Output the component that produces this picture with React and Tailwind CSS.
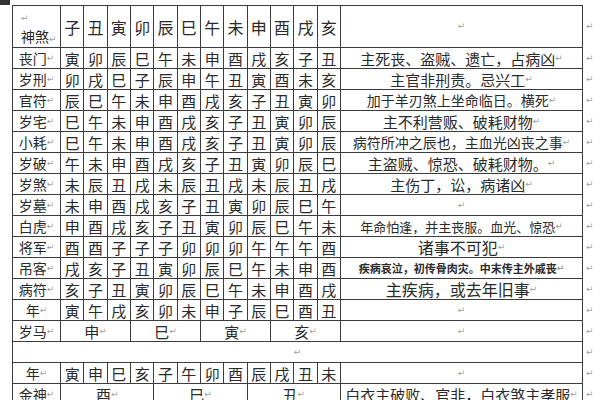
const branches = ["子", "丑", "寅", "卯", "辰", "巳", "午", "未", "申", "酉", "戌", "亥"];

// each row: name, 12 branch cells, note text and its font size class
const rows = [
  { name: "丧门", cells: "寅卯辰巳午未申酉戌亥子丑", note: "主死丧、盗贼、遗亡，占病凶", size: "text-[15px]" },
  { name: "岁刑", cells: "卯戌巳子辰申午丑寅酉未亥", note: "主官非刑责。忌兴工", size: "text-[15px]" },
  { name: "官符", cells: "辰巳午未申酉戌亥子丑寅卯", note: "加于羊刃煞上坐命临日。横死", size: "text-[14px]" },
  { name: "岁宅", cells: "巳午未申酉戌亥子丑寅卯辰", note: "主不利营贩、破耗财物", size: "text-[15px]" },
  { name: "小耗", cells: "巳午未申酉戌亥子丑寅卯辰", note: "病符所冲之辰也，主血光凶丧之事", size: "text-[14px]" },
  { name: "岁破", cells: "午未申酉戌亥子丑寅卯辰巳", note: "主盗贼、惊恐、破耗财物。", size: "text-[15px]" },
  { name: "岁煞", cells: "未辰丑戌未辰丑戌未辰丑戌", note: "主伤丁，讼，病诸凶", size: "text-[15px]" },
  { name: "岁墓", cells: "未申酉戌亥子丑寅卯辰巳午", note: "", size: "text-[15px]" },
  { name: "白虎", cells: "申酉戌亥子丑寅卯辰巳午未", note: "年命怕逢，并主丧服。血光、惊恐", size: "text-[13px]" },
  { name: "将军", cells: "酉酉子子子卯卯卯午午午酉", note: "诸事不可犯", size: "text-[16px]" },
  { name: "吊客", cells: "戌亥子丑寅卯辰巳午未申酉", note: "疾病哀泣，初传骨肉灾。中末传主外戚丧", size: "text-[11px] font-bold" },
  { name: "病符", cells: "亥子丑寅卯辰巳午未申酉戌", note: "主疾病，或去年旧事", size: "text-[16px]" },
  { name: "年", cells: "寅午戌亥卯未申子辰巳酉丑", note: "", size: "text-[15px]" },
];

const Mark = () => (
  <span className="text-[9px] leading-none text-[#a0a0a0] font-['DejaVu_Sans',sans-serif]">↵</span>
);

const cell = "border border-[#3c3c3c] p-0";

// fixed-height cell body so rows stay 21px
function Box({ children, className = "" }) {
  return (
    <div className={"h-[20px] flex items-center justify-center leading-none whitespace-nowrap overflow-hidden " + className}>
      {children}
    </div>
  );
}

export default function App() {
  return (
    <div className="w-[600px] h-[400px] overflow-hidden bg-white relative font-['Noto_Sans_CJK_SC',sans-serif] text-[#2a2a2a]">
      {/* word table handle */}
      <div className="absolute left-0 top-0 w-[10px] h-[5px] bg-[#333]"></div>
      <div className="pl-[12px] pt-[5px]">
        <table className="table-fixed border-collapse w-[584px]">
          <colgroup>
            <col className="w-[48px]" />
            {branches.map((b) => (
              <col key={b} className="w-[23.33px]" />
            ))}
            <col className="w-[242px]" />
            <col className="w-[14px]" />
          </colgroup>
          <tbody>
            <tr>
              <td className={cell}>
                <div className="h-[41px] flex flex-col justify-between pt-[8px] pb-[3px] pl-[8px] leading-none">
                  <Mark />
                  <span className="text-[14px] whitespace-nowrap">神煞<Mark /></span>
                </div>
              </td>
              {branches.map((b) => (
                <td key={b} className={cell}>
                  <div className="h-[41px] flex items-center justify-center text-[16px] leading-none">{b}</div>
                </td>
              ))}
              <td className={cell}>
                <div className="h-[41px] flex items-center justify-center"><Mark /></div>
              </td>
              <td className="p-0 align-top">
                <div className="pl-[3px] pt-[8px] leading-none"><Mark /></div>
              </td>
            </tr>

            {rows.map((r, i) => (
              <tr key={i}>
                <td className={cell}><Box className="text-[14px]">{r.name}<Mark /></Box></td>
                {r.cells.split("").map((c, j) => (
                  <td key={j} className={cell}><Box className="text-[15px]">{c}</Box></td>
                ))}
                <td className={cell}><Box className={r.size}>{r.note}<Mark /></Box></td>
                <td className="p-0"><Box className="justify-start pl-[3px]"><Mark /></Box></td>
              </tr>
            ))}

            <tr>
              <td className={cell}><Box className="text-[14px]">岁马<Mark /></Box></td>
              {["申", "巳", "寅", "亥"].map((c) => (
                <td key={c} colSpan={3} className={cell}><Box className="text-[15px]">{c}<Mark /></Box></td>
              ))}
              <td className={cell}><Box><Mark /></Box></td>
              <td className="p-0"><Box className="justify-start pl-[3px]"><Mark /></Box></td>
            </tr>

            <tr>
              <td colSpan={14} className={cell}><Box><Mark /></Box></td>
              <td className="p-0"><Box className="justify-start pl-[3px]"><Mark /></Box></td>
            </tr>

            <tr>
              <td className={cell}><Box className="text-[14px]">年<Mark /></Box></td>
              {"寅申巳亥子午卯酉辰戌丑未".split("").map((c, j) => (
                <td key={j} className={cell}><Box className="text-[15px]">{c}</Box></td>
              ))}
              <td className={cell}><Box><Mark /></Box></td>
              <td className="p-0"><Box className="justify-start pl-[3px]"><Mark /></Box></td>
            </tr>

            <tr>
              <td className={cell}><Box className="text-[14px]">金神<Mark /></Box></td>
              {["酉", "巳", "丑"].map((c) => (
                <td key={c} colSpan={4} className={cell}><Box className="text-[15px]">{c}<Mark /></Box></td>
              ))}
              <td className={cell}><Box className="text-[15px]">白衣主破败、官非，白衣煞主孝服<Mark /></Box></td>
              <td className="p-0"><Box className="justify-start pl-[3px]"><Mark /></Box></td>
            </tr>
          </tbody>
        </table>
      </div>
    </div>
  );
}
